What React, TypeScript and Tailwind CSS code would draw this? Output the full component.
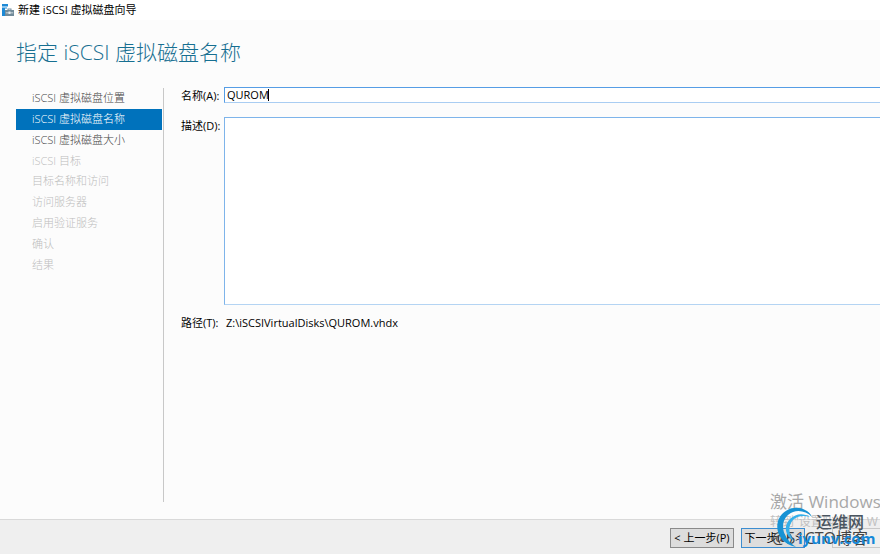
import { useState } from "react";

const steps = [
  { label: "iSCSI 虚拟磁盘位置", state: "done" },
  { label: "iSCSI 虚拟磁盘名称", state: "current" },
  { label: "iSCSI 虚拟磁盘大小", state: "done" },
  { label: "iSCSI 目标", state: "disabled" },
  { label: "目标名称和访问", state: "disabled" },
  { label: "访问服务器", state: "disabled" },
  { label: "启用验证服务", state: "disabled" },
  { label: "确认", state: "disabled" },
  { label: "结果", state: "disabled" },
];

const stepStyles: Record<string, string> = {
  done: "text-[#444444]",
  current: "bg-[#0072bc] text-white",
  disabled: "text-[#bcbcbc]",
};

function WizardIcon() {
  return (
    <svg className="w-3 h-3 shrink-0" viewBox="0 0 12 12">
      <path d="M0 0h6v2.6H0zM0 3.4h5v1H3v7.6H0z" fill="#1e8ad6" />
      <path d="M5.5 6V4.5h4V6H12v6H3V6zM6.5 5.4V6h2v-.6z" fill="#728c9b" fillRule="evenodd" />
      <path d="M3.8 8.4h2.7v-.8h2v.8h2.7v.8H8.5v.7h-2v-.7H3.8z" fill="#e9f0f3" />
    </svg>
  );
}

function Watermark() {
  return (
    <div className="pointer-events-none absolute right-0 bottom-0 h-16 w-28 overflow-hidden whitespace-nowrap">
      <p className="absolute left-0.5 top-0 text-[17px] leading-6 text-[#a8a8a8]">激活 Windows</p>
      <p className="absolute left-0.5 top-6 text-xs leading-4 text-[#c0c0c0]">转到"设置"以激活 W</p>
      <p className="absolute left-1 top-9 text-base leading-6 text-[#444444]">@51CTO博客</p>
      <svg className="absolute left-2 top-4 h-11 w-10" viewBox="0 0 40 44" fill="none">
        <path
          d="M20 41C5 38-1 26 2 15 6 3 20-2 31 5c3 2 4 4 5 6C29 4 19 3 12 9 4 16 5 31 20 41Z"
          fill="#1792d4"
        />
        <path d="M18 35C9 30 7 20 14 13c6-6 14-6 20-2-7-2-13-1-17 3-5 6-5 13 1 21Z" fill="#35b0ea" />
      </svg>
      <p className="absolute left-12 top-5 text-base leading-6 font-medium text-[#4a5560]">运维网</p>
      <p className="absolute left-[30px] top-[38px] text-[15px] leading-5 font-bold text-[#1688d8]">iyunv.com</p>
    </div>
  );
}

export default function App() {
  const [name, setName] = useState("QUROM");
  const [description, setDescription] = useState("");

  return (
    <div className="relative flex min-h-screen flex-col overflow-hidden bg-[#fcfcfc] font-['Open_Sans','Noto_Sans_CJK_SC',sans-serif] text-[11px] text-black">
      <header className="flex h-5 items-center gap-1 bg-white px-0.5">
        <WizardIcon />
        <span className="leading-5">新建 iSCSI 虚拟磁盘向导</span>
      </header>

      <h1 className="mt-4 px-4 pb-0.5 text-[21px] leading-8 font-light text-[#176f91]">指定 iSCSI 虚拟磁盘名称</h1>

      <main className="mt-4 flex flex-1 pt-px pb-[17px]">
        <nav className="mt-px w-41 shrink-0 border-r border-[#c8c8c8] pr-px pl-4">
          <ol className="grid h-[187px] grid-rows-9">
            {steps.map((step) => (
              <li
                key={step.label}
                aria-current={step.state === "current" ? "step" : undefined}
                className={`flex items-center pl-4 leading-5 font-light ${stepStyles[step.state]}`}
              >
                {step.label}
              </li>
            ))}
          </ol>
        </nav>

        <div className="min-w-0 flex-1 pl-[17px]">
          <div className="flex">
            <label htmlFor="disk-name" className="w-[43px] shrink-0 pt-px leading-4 whitespace-nowrap">名称(A):</label>
            <div className="relative flex-1">
              <input
                id="disk-name"
                className="block h-4 w-full border border-r-0 border-t-[#569de5] border-b-[#a9cdf2] border-l-[#569de5] bg-white px-0.5 pb-0.5 leading-3 outline-none"
                value={name}
                onChange={(e) => setName(e.target.value)}
              />
              {/* Caret */}
              <span className="absolute left-11 top-0.5 h-3 w-px bg-black" />
            </div>
          </div>
          <div className="mt-3 flex pt-px">
            <label htmlFor="description" className="w-[43px] shrink-0 pt-px leading-4 whitespace-nowrap">描述(D):</label>
            <textarea
              id="description"
              className="h-47 min-w-0 flex-1 resize-none border border-r-0 border-t-[#7eb4ea] border-b-[#b4d4f3] border-l-[#7eb4ea] bg-white p-0.5 outline-none"
              value={description}
              onChange={(e) => setDescription(e.target.value)}
            />
          </div>
          <div className="mt-2.5 flex leading-4">
            <span className="w-[43px] shrink-0">路径(T):</span>
            <span className="pl-0.5">Z:\iSCSIVirtualDisks\QUROM.vhdx</span>
          </div>
        </div>
      </main>

      <footer className="flex h-[35px] shrink-0 items-center justify-end border-t border-[#d9d9d9] bg-[#efefef] pt-0.5">
        <button type="button" className="h-5 w-16 border border-[#8a8a8a] bg-[#dddddd] whitespace-nowrap">&lt; 上一步(P)</button>
        <button type="button" className="ml-[7px] h-5 w-16 border border-[#3c8dd0] bg-[#dddddd] whitespace-nowrap">下一步(N) &gt;</button>
        <button type="button" disabled aria-label="创建" className="ml-[27px] h-5 w-12 border border-r-0 border-[#c8c8c8] bg-[#efefef]" />
      </footer>
      <Watermark />
    </div>
  );
}
